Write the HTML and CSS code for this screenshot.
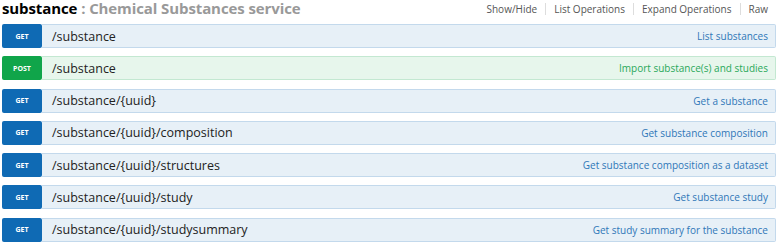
FILE: index.html
```html
<!DOCTYPE html>
<html lang="en">
<head>
    <meta charset="UTF-8">
    <title>substance : Chemical Substances service</title>
    <link rel="stylesheet" href="styles.css">
</head>
<body>

    <div class="resource">
        <div class="heading">
            <h2><span class="name">substance</span> : Chemical Substances service</h2>
            <ul class="options">
                <li>Show/Hide</li>
                <li>List Operations</li>
                <li>Expand Operations</li>
                <li>Raw</li>
            </ul>
        </div>

        <ul class="endpoints">
            <li class="op get">
                <span class="verb">GET</span>
                <span class="path">/substance</span>
                <span class="summary">List substances</span>
            </li>
            <li class="op post">
                <span class="verb">POST</span>
                <span class="path">/substance</span>
                <span class="summary">Import substance(s) and studies</span>
            </li>
            <li class="op get">
                <span class="verb">GET</span>
                <span class="path">/substance/{uuid}</span>
                <span class="summary">Get a substance</span>
            </li>
            <li class="op get">
                <span class="verb">GET</span>
                <span class="path">/substance/{uuid}/composition</span>
                <span class="summary">Get substance composition</span>
            </li>
            <li class="op get">
                <span class="verb">GET</span>
                <span class="path">/substance/{uuid}/structures</span>
                <span class="summary">Get substance composition as a dataset</span>
            </li>
            <li class="op get">
                <span class="verb">GET</span>
                <span class="path">/substance/{uuid}/study</span>
                <span class="summary">Get substance study</span>
            </li>
            <li class="op get">
                <span class="verb">GET</span>
                <span class="path">/substance/{uuid}/studysummary</span>
                <span class="summary">Get study summary for the substance</span>
            </li>
        </ul>
    </div>

</body>
</html>
```

FILE: styles.css
```css
body {
    font-family: 'Open Sans', 'DejaVu Sans', sans-serif;
    margin: 0;
    padding: 0;
    background-color: #fff;
}

.resource {
    padding: 0 3px 0 2px;
}

.heading {
    display: flex;
    justify-content: space-between;
    align-items: flex-start;
    height: 20px;
}

.heading h2 {
    margin: 0;
    font-size: 15px;
    line-height: 16px;
    font-weight: bold;
    color: #999;
    letter-spacing: -0.1px;
}

.heading .name {
    color: #000;
}

.options {
    list-style: none;
    margin: 3px 0 0 0;
    padding: 0 8px 0 0;
    display: flex;
    font-size: 10px;
    color: #555;
}

.options li {
    padding: 0 8px;
    border-left: 1px solid #ddd;
    line-height: 12px;
}

.options li:first-child {
    border-left: none;
}

.options li:last-child {
    padding-right: 0;
}

.endpoints {
    list-style: none;
    margin: 4px 0 0 0;
    padding: 0;
    display: flex;
    flex-direction: column;
    gap: 8.3px;
}

.op {
    position: relative;
    display: flex;
    align-items: center;
    height: 24px;
}

.verb {
    width: 40px;
    height: 24px;
    box-sizing: border-box;
    display: flex;
    align-items: center;
    justify-content: center;
    color: #fff;
    font-size: 7px;
    font-weight: bold;
    border-radius: 2px;
    flex-shrink: 0;
}

.path {
    flex: 1;
    display: flex;
    align-items: center;
    height: 24px;
    box-sizing: border-box;
    padding-left: 10px;
    font-size: 12.5px;
    color: #222;
    border: 1px solid;
    border-left: none;
    border-radius: 0 2px 2px 0;
}

.summary {
    position: absolute;
    right: 8px;
    font-size: 10px;
}

.get .verb {
    background-color: #0f6ab4;
}

.get .path {
    background-color: #e7f0f7;
    border-color: #c3d9ec;
}

.get .summary {
    color: #2f77b8;
}

.post .verb {
    background-color: #10a54a;
}

.post .path {
    background-color: #e7f6ec;
    border-color: #c3e8d1;
}

.post .summary {
    color: #2aa85a;
}
```
